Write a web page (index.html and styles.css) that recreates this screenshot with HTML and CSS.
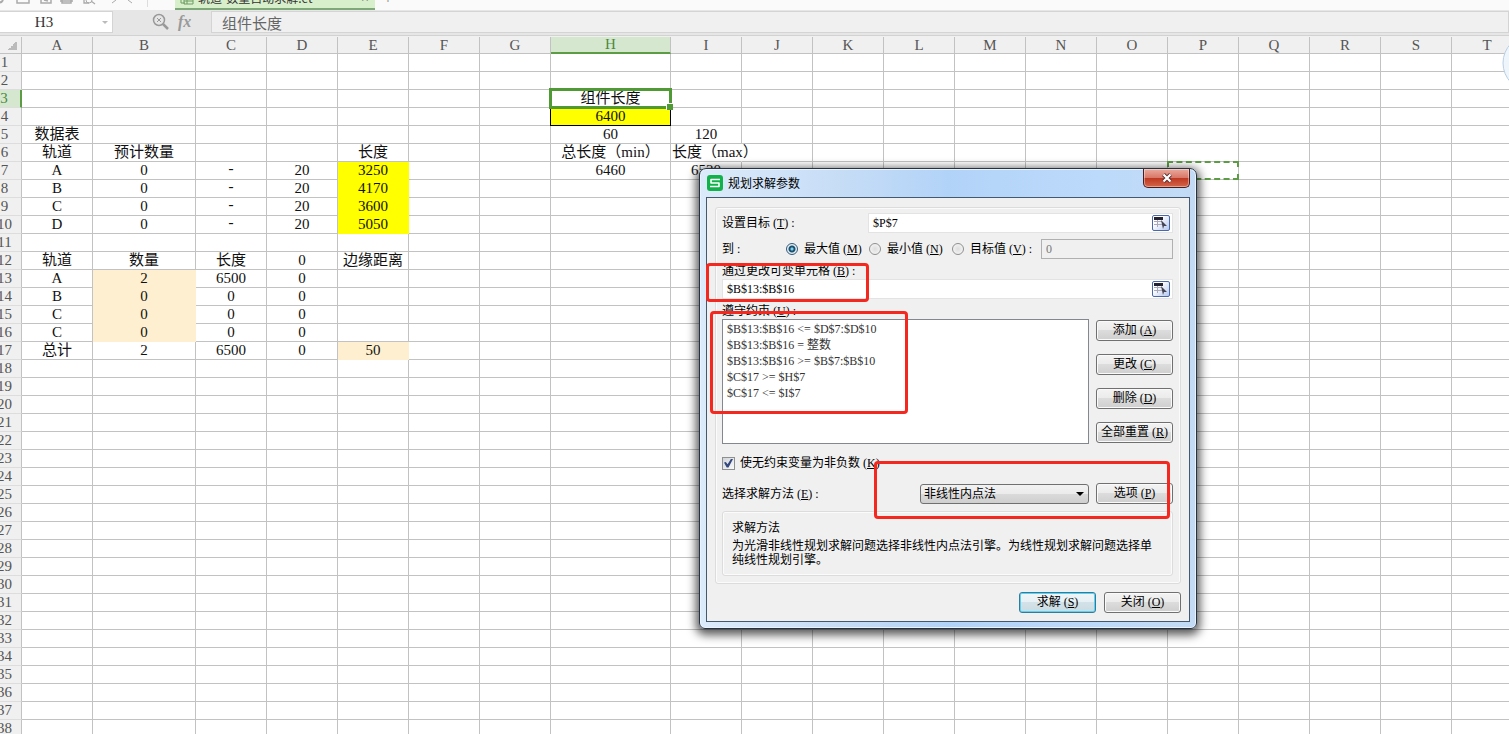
FILE: index.html
```html
<!DOCTYPE html>
<html lang="zh-CN">
<head>
<meta charset="utf-8">
<title>轨道-数量自动求解.et</title>
<link rel="stylesheet" href="styles.css">
</head>
<body>
<header class="tabstrip">
  <svg class="quick-icons" viewBox="0 0 175 9" width="175" height="9" fill="none" stroke="#aaa">
    <path d="M-2 2a4 4 0 0 0 5-2" stroke-width="2"/>
    <path d="M17 0v3h12V0M41 0v3h10V0M44 0l4 1M60 1h13M62 0v3h9V0" stroke-width="1.5"/>
    <path d="M84 0v3h5M91 1l4 3" stroke-width="1.3"/><circle cx="89" cy="0" r="3"/>
    <path d="M112 3l4-3M132 3l-4-3"/><path d="M147.500 0v7" stroke="#ddd"/>
  </svg>
  <div class="tab">
    <svg viewBox="0 0 14 9" width="14" height="9" fill="none" stroke="#6d9b62"><path d="M1 0v3h4M4 0v4h9V0M7 0v4M4 1h9"/></svg>
    <span class="tab-name">轨道-数量自动求解.et</span>
    <span class="tab-close">×</span>
  </div>
  <span class="tab-plus">+</span>
</header>
<div class="formula-bar">
  <div class="name-box"><input class="name-input" aria-label="名称框" value="H3"><span class="name-arrow"></span></div>
  <div class="fx-tools">
    <svg viewBox="0 0 18 18" width="18" height="18" fill="none" stroke="#999" stroke-width="1.5"><circle cx="7" cy="7" r="5.500"/><path d="M11 11l5 5" stroke-width="2.500"/><path d="M5 5l4 4M9 5L5 9" stroke-width="1"/></svg>
    <span class="fx">fx</span>
  </div>
  <input class="formula-input" aria-label="编辑栏" value="组件长度">
</div>
<main class="sheet">
  <table class="grid" id="grid"></table>
  <svg class="assistant" viewBox="0 0 10 50" width="10" height="50"><circle cx="32" cy="25" r="28" fill="#eef5fb" stroke="#b9cfe2"/></svg>
</main>

<section class="dialog" role="dialog" aria-labelledby="dlg-title">
  <div class="titlebar">
    <svg viewBox="0 0 16 16" width="16" height="16"><rect width="16" height="16" rx="3" fill="#12b24b"/><path d="M13 4.500H4v3.500h8v3.500H3" fill="none" stroke="#fff" stroke-width="1.600" stroke-linejoin="round"/></svg>
    <h1 class="dlg-title" id="dlg-title">规划求解参数</h1>
    <button class="close" aria-label="关闭窗口"><svg viewBox="0 0 12 10" width="12" height="10"><path d="M2.500 1.500l7 7M9.500 1.500l-7 7" stroke="#5a3030" stroke-width="4"/><path d="M2.500 1.500l7 7M9.500 1.500l-7 7" stroke="#fff" stroke-width="2.200"/></svg></button>
  </div>
  <form class="client">
    <div class="group">
      <div class="row target-row">
        <label for="target">设置目标 (<u>T</u>) :</label>
        <div class="ref-field"><input id="target" value="$P$7">
          <button type="button" class="picker" aria-label="选择目标单元格"><svg viewBox="0 0 16 14" width="16" height="14"><rect x="1" y="1" width="9" height="3" fill="#223"/><path d="M1 5.500h8M1 8.500h8M4.500 4v7" stroke="#aab"/><path d="M8 4l6 6-3 0-1 3z" fill="#445"/></svg></button></div>
      </div>
      <div class="row goal-row">
        <span>到 :</span>
        <label class="choice"><input type="radio" name="goal" checked>最大值 (<u>M</u>)</label>
        <label class="choice"><input type="radio" name="goal">最小值 (<u>N</u>)</label>
        <label class="choice"><input type="radio" name="goal">目标值 (<u>V</u>) :</label>
        <input class="goal-value" aria-label="目标值" value="0" disabled>
      </div>
      <label class="caption" for="vars">通过更改可变单元格 (<u>B</u>) :</label>
      <div class="ref-field"><input id="vars" value="$B$13:$B$16">
        <button type="button" class="picker" aria-label="选择可变单元格"><svg viewBox="0 0 16 14" width="16" height="14"><rect x="1" y="1" width="9" height="3" fill="#223"/><path d="M1 5.500h8M1 8.500h8M4.500 4v7" stroke="#aab"/><path d="M8 4l6 6-3 0-1 3z" fill="#445"/></svg></button></div>
      <span class="caption" id="cons">遵守约束 (<u>U</u>) :</span>
      <div class="split">
        <ul class="list" aria-labelledby="cons">
          <li>$B$13:$B$16 &lt;= $D$7:$D$10</li>
          <li>$B$13:$B$16 = 整数</li>
          <li>$B$13:$B$16 &gt;= $B$7:$B$10</li>
          <li>$C$17 &gt;= $H$7</li>
          <li>$C$17 &lt;= $I$7</li>
        </ul>
        <div class="side">
          <button type="button" class="btn">添加 (<u>A</u>)</button>
          <button type="button" class="btn">更改 (<u>C</u>)</button>
          <button type="button" class="btn">删除 (<u>D</u>)</button>
          <button type="button" class="btn">全部重置 (<u>R</u>)</button>
        </div>
      </div>
      <label class="check"><input type="checkbox" checked>使无约束变量为非负数 (<u>K</u>)</label>
      <div class="row method-row">
        <label for="method">选择求解方法 (<u>E</u>) :</label>
        <div class="select"><select id="method"><option>非线性内点法</option></select></div>
        <button type="button" class="btn">选项 (<u>P</u>)</button>
      </div>
      <div class="group info">
        <h2 class="info-title">求解方法</h2>
        <p class="info-text">为光滑非线性规划求解问题选择非线性内点法引擎。为线性规划求解问题选择单纯线性规划引擎。</p>
      </div>
    </div>
    <div class="footer">
      <button type="button" class="btn primary">求解 (<u>S</u>)</button>
      <button type="button" class="btn">关闭 (<u>O</u>)</button>
    </div>
  </form>
  <div class="mark mark-vars"></div>
  <div class="mark mark-cons"></div>
  <div class="mark mark-method"></div>
</section>
<script src="sheet.js"></script>
</body>
</html>
```
FILE: styles.css
```css
* { box-sizing: border-box; }
body {
  margin: 0;
  height: 100vh;
  overflow: hidden;
  display: flex;
  flex-direction: column;
  background: #fff;
  font: 15px "Liberation Serif", "Noto Sans CJK SC", serif;
  color: #111;
}
input, button, select { font: inherit; color: inherit; margin: 0; }

.tabstrip {
  flex: none;
  height: 10px;
  display: flex;
  align-items: flex-start;
  background: #fafafa;
  overflow: hidden;
}
.quick-icons { flex: none; }
.tab {
  display: flex;
  width: 200px;
  height: 10px;
  padding: 0 6px 0 5px;
  background: #d8efcb;
  border-bottom: 2px solid #7fa878;
}
.tab-name {
  margin: -10px auto 0 4px;
  font: 12px/16px "Noto Sans CJK SC", sans-serif;
  color: #333;
}
.tab-close, .tab-plus { margin-top: -9px; font-size: 14px; line-height: 16px; color: #666; }
.tab-plus { margin-left: 9px; }

.formula-bar {
  flex: none;
  display: flex;
  align-items: center;
  height: 26px;
  padding: 1px 0 2px;
  background: #e6e6e6;
  border-bottom: 1px solid #d2d2d2;
}
.name-box {
  display: flex;
  align-items: center;
  width: 113px;
  height: 22px;
  padding-right: 4px;
  background: #fff;
  border: 1px solid #d4d4d4;
  border-left: 0;
}
.name-input { flex: 1; min-width: 0; padding: 0 14px 0 0; border: 0; background: none; text-align: center; color: #333; }
.name-arrow { border: 3px solid transparent; border-top-color: #bbb; border-bottom: 0; }
.fx-tools { display: flex; align-items: center; gap: 8px; width: 98px; padding-left: 39px; }
.fx { font: italic bold 16px/18px "Liberation Serif", serif; color: #999; }
.formula-input {
  flex: 1;
  height: 22px;
  padding: 0 10px;
  border: 1px solid #d4d4d4;
  background: #f0f0f0;
  color: #666;
}

.sheet { position: relative; flex: 1; min-height: 0; overflow: hidden; padding-top: 1px; background: #f0f0f0; }
.grid { table-layout: fixed; width: 1535px; margin-left: -12px; border-collapse: separate; border-spacing: 0; background: #fff; }
.col-head { width: 34px; }
.col-n { width: 71px; }
.col-b { width: 103px; }
.col-h { width: 120px; }
.grid th, .grid td {
  height: 18px;
  padding: 0;
  border-right: 1px solid #c2c2c2;
  border-bottom: 1px solid #c2c2c2;
  font-weight: normal;
  line-height: 17px;
  text-align: center;
  white-space: nowrap;
}
.grid th { background: #f0f0f0; color: #555; }
.grid thead th { height: 17px; line-height: 15px; vertical-align: bottom; }
.grid tbody th { border-bottom-color: #ddd; }
.grid .corner { background: linear-gradient(135deg, transparent 50%, #bbb 50%) right 4px center / 9px 9px no-repeat #f0f0f0; }
.grid .head-on { background: #d5e8cf; color: #4c8a3f; border-bottom: 2px solid #5b9c45; }
.grid .row-on { background: #d5e8cf; color: #4c8a3f; border-right: 2px solid #5b9c45; }
.grid .yellow { background: #ff0; border-color: #ff0; }
.grid .cream { background: #fdefcf; border-color: #fdefcf; }
.grid .boxed { background: #ff0; border-color: #000; box-shadow: -1px 0 #000; }
.grid .spill { text-align: left; padding-left: 1px; border-right-color: transparent; }
.grid .dash { font-family: "Liberation Mono", monospace; }
.grid .active, .grid .target { position: relative; }
.active::before { content: ""; position: absolute; inset: -2px; border: 3px solid #4f9a35; }
.active::after { content: ""; position: absolute; right: -3px; bottom: -3px; width: 6px; height: 6px; background: #4f9a35; border: 1px solid #fff; border-width: 1px 0 0 1px; }
.target::before { content: ""; position: absolute; inset: -1px; border: 2px dashed #5b9c45; }
.assistant { position: absolute; right: 0; top: 2px; }

.dialog {
  position: absolute;
  left: 699px;
  top: 168px;
  width: 498px;
  padding: 0 6px 6px;
  border: 1px solid #26323f;
  border-radius: 7px 7px 6px 6px;
  background: linear-gradient(90deg, #dcebfa 0, #c5dcf6 30%, #b2d3f8 50%, #bcdafb 80%, #c3dbf5 100%);
  box-shadow: inset 0 0 0 1px #e8f3ff, 0 3px 10px 3px rgba(0, 0, 0, 0.65);
  font-size: 12px;
  line-height: 14px;
  color: #000;
}
.titlebar { display: flex; align-items: center; gap: 5px; height: 28px; padding-left: 1px; }
.dlg-title { flex: 1; margin: 0; font: 12px/16px "Noto Sans CJK SC", sans-serif; }
.close {
  align-self: flex-start;
  display: flex;
  align-items: center;
  justify-content: center;
  width: 47px;
  height: 19px;
  padding: 0;
  border: 1px solid #4a1c1c;
  border-top: 0;
  border-radius: 0 0 5px 5px;
  background: linear-gradient(#eaa99b 0, #d9786a 48%, #bd3620 50%, #d3664a 100%);
  box-shadow: inset 0 0 0 1px rgba(255, 255, 255, 0.4);
}
.client { padding: 9px 8px 8px; border: 1px solid #44586e; background: #f0f0f0; }
.group { padding: 5px 7px 7px 6px; border: 1px solid #dcdcdc; border-radius: 3px; box-shadow: inset 0 0 0 1px #fbfbfb; }
.row { display: grid; align-items: center; }
.target-row { grid-template-columns: 146px 1fr; }
.ref-field { display: flex; align-items: center; height: 20px; padding: 0 2px 0 4px; background: #fff; border: 1px solid #e3e3e3; }
.ref-field input { flex: 1; min-width: 0; padding: 0; border: 0; background: none; outline: 0; }
.picker { display: flex; width: 18px; height: 16px; padding: 0; border: 1px solid #4a68a8; border-radius: 2px; background: linear-gradient(135deg, #fff 30%, #b4c8ee); }
.goal-row { grid-template-columns: 64px 83px 83px 89px 1fr; margin-top: 6px; }
.choice { display: flex; align-items: center; white-space: pre; }
.choice input {
  appearance: none;
  width: 12px;
  height: 12px;
  margin-right: 6px;
  border: 1px solid #8e8f8f;
  border-radius: 50%;
  background: radial-gradient(#ddd, #fafafa);
}
.choice input:checked { border-color: #32597c; background: radial-gradient(circle, #7fd0ee 0 1px, #1b506e 2px 3px, #e6eef2 4px); }
.goal-value { width: 100%; height: 20px; padding: 0 4px; border: 1px solid #b0b0b0; background: #f0f0f0; }
.goal-value:disabled { color: #777; }
.caption { display: block; margin: 5px 0 1px; }
.split { display: grid; grid-template-columns: 1fr 77px; gap: 7px; margin-bottom: 12px; }
.list { margin: 0; padding: 1px 4px; border: 1px solid #828790; background: #fff; list-style: none; line-height: 16px; height: 125px; color: #333; }
.side { display: flex; flex-direction: column; gap: 13px; padding-top: 1px; }
.btn {
  height: 21px;
  min-width: 77px;
  padding: 0;
  border: 1px solid #707070;
  border-radius: 3px;
  background: linear-gradient(#f3f3f3 0, #ebebeb 48%, #dcdcdc 50%, #cfcfcf 100%);
  box-shadow: inset 0 0 0 1px #fafafa;
  line-height: 17px;
  white-space: nowrap;
}
.primary { border-color: #2f7d9c; box-shadow: inset 0 0 0 1px #5fd0f0; background: linear-gradient(#f0f6f9 0, #e6f0f4 48%, #d3e2e9 50%, #cbdbe2 100%); }
.check { display: flex; align-items: center; white-space: pre; }
.check input {
  appearance: none;
  width: 13px;
  height: 13px;
  margin-right: 5px;
  border: 1px solid #8e8f8f;
  background: linear-gradient(135deg, #d0d5da, #fafafa);
}
.check input::before {
  content: "";
  display: block;
  width: 9px;
  height: 9px;
  margin: 1px;
  background: #35477f;
  clip-path: polygon(0 45%, 20% 40%, 40% 65%, 80% 0, 100% 5%, 50% 100%, 30% 100%);
}
.method-row { grid-template-columns: 198px 1fr 77px; margin-top: 13px; }
.select { position: relative; margin-right: 7px; }
.select::after { content: ""; position: absolute; right: 5px; top: 8px; border: 4px solid transparent; border-top-color: #000; border-bottom: 0; }
.select select { appearance: none; display: block; width: 100%; height: 20px; padding: 0 3px; border: 1px solid #707070; border-radius: 3px; background: linear-gradient(#f2f2f2 0, #ebebeb 48%, #dadada 50%, #cfcfcf 100%); }
.info { margin-top: 7px; padding: 9px 9px 8px; }
.info-title { margin: 0 0 4px; font-size: 12px; font-weight: normal; line-height: 14px; }
.info-text { margin: 0; }
.footer { display: flex; justify-content: flex-end; gap: 8px; margin-top: 8px; }

/* Red annotation frames laid over the dialog */
.mark { position: absolute; border: 3px solid #f5281f; border-radius: 4px; pointer-events: none; }
.mark-vars { left: 6px; top: 94px; width: 163px; height: 39px; }
.mark-cons { left: 10px; top: 142px; width: 198px; height: 103px; }
.mark-method { left: 174px; top: 292px; width: 296px; height: 58px; }
```
FILE: sheet.js
```js
const cols = "ABCDEFGHIJKLMNOPQRST".split("");
const cells = {
  H3: ["组件长度", "active"], H4: ["6400", "boxed"], H5: ["60"], I5: ["120"], A5: ["数据表"],
  A6: ["轨道"], B6: ["预计数量"], E6: ["长度"], H6: ["总长度（min）"], I6: ["长度（max）", "spill"],
  H7: ["6460"], I7: ["6520"], P7: ["", "target"],
  A12: ["轨道"], B12: ["数量"], C12: ["长度"], D12: ["0"], E12: ["边缘距离"],
  A17: ["总计"], B17: ["2"], C17: ["6500"], D17: ["0"], E17: ["50", "cream"]
};
[["A", "3250"], ["B", "4170"], ["C", "3600"], ["D", "5050"]].forEach(([name, len], i) => {
  const r = 7 + i;
  cells["A" + r] = [name];
  cells["B" + r] = ["0"];
  cells["C" + r] = ["-", "dash"];
  cells["D" + r] = ["20"];
  cells["E" + r] = [len, "yellow"];
});
[["A", "2", "6500"], ["B", "0", "0"], ["C", "0", "0"], ["C", "0", "0"]].forEach(([name, n, len], i) => {
  const r = 13 + i;
  cells["A" + r] = [name];
  cells["B" + r] = [n, "cream"];
  cells["C" + r] = [len];
  cells["D" + r] = ["0"];
});

const widthClass = c => (c === "B" ? "col-b" : c === "H" ? "col-h" : "col-n");
let html = '<colgroup><col class="col-head">' + cols.map(c => `<col class="${widthClass(c)}">`).join("") + "</colgroup>";
html += '<thead><tr><th class="corner"></th>' + cols.map(c => `<th${c === "H" ? ' class="head-on"' : ""}>${c}</th>`).join("") + "</tr></thead><tbody>";
for (let r = 1; r <= 38; r++) {
  html += `<tr><th${r === 3 ? ' class="row-on"' : ""}>${r}</th>`;
  for (const c of cols) {
    const [text, cls] = cells[c + r] || [""];
    html += `<td${cls ? ` class="${cls}"` : ""}>${text}</td>`;
  }
  html += "</tr>";
}
document.getElementById("grid").innerHTML = html + "</tbody>";
```
